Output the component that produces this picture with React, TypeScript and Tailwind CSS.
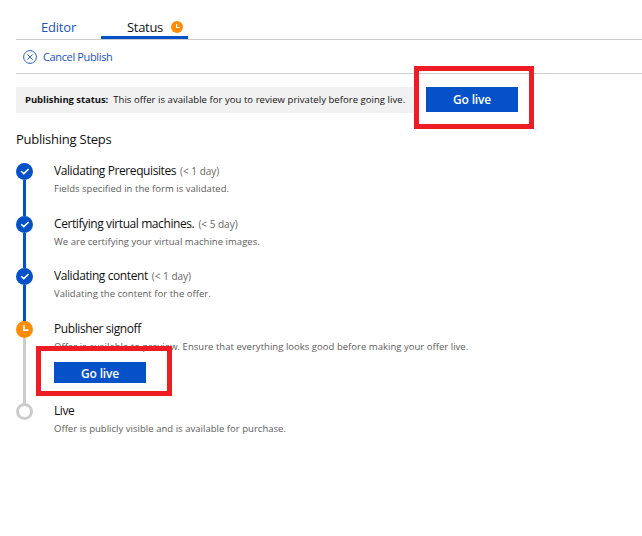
import type { ReactNode } from "react";

function ClockIcon({ className }: { className: string }) {
  return (
    <svg viewBox="0 0 17 17" className={className}>
      <circle cx="8.5" cy="8.5" r="8.5" fill="#ff8c00" />
      <path d="M8 4v5.2h4.4" fill="none" stroke="#fff" strokeWidth="1.7" />
    </svg>
  );
}

function CheckIcon() {
  return (
    <svg viewBox="0 0 17 17" className="block size-[17px]">
      <circle cx="8.5" cy="8.5" r="8.5" fill="#0551c8" />
      <path d="M5.2 8.2l2.6 2.4 4.8-4.6" fill="none" stroke="#fff" strokeWidth="1.5" />
    </svg>
  );
}

function CancelIcon() {
  return (
    <svg viewBox="0 0 14 14" className="mt-px block size-[14px]" fill="none" stroke="#2a63c4">
      <circle cx="7" cy="7" r="6.4" strokeWidth="1" />
      <path d="M4.3 4.3l5.4 5.4M9.7 4.3l-5.4 5.4" strokeWidth="1" />
    </svg>
  );
}

function GoLive({ className }: { className: string }) {
  return (
    <button
      className={`flex w-[92px] items-center justify-center bg-[#0551c8] text-[12px] font-semibold tracking-[-0.2px] text-white ${className}`}
    >
      Go live
    </button>
  );
}

type StepProps = {
  icon: ReactNode;
  title: string;
  duration?: string;
  text: string;
  height: string;
  line?: string;
  children?: ReactNode;
};

function Step({ icon, title, duration, text, height, line, children }: StepProps) {
  return (
    <li className={`flex ${height}`}>
      <div className="flex w-[17px] shrink-0 flex-col items-center">
        {icon}
        {line && <div className={`w-[3px] grow ${line}`} />}
      </div>
      <div className="ml-[21px] whitespace-nowrap">
        <div className="flex h-[17px] items-baseline text-[12px] leading-[16px] text-[#111]">
          <span className="tracking-[-0.41px]">{title}</span>
          {duration && <span className="ml-1 text-[10px] text-[#666]">{duration}</span>}
        </div>
        <p className="mt-[2px] h-[14px] text-[9.5px] leading-[14px] tracking-[0.03px] text-[#5c5c5c]">{text}</p>
        {children}
      </div>
    </li>
  );
}

export default function App() {
  return (
    <main className="relative h-[536px] w-[642px] overflow-hidden bg-white pl-4 font-['Open_Sans','Noto_Sans',sans-serif] text-[#111]">
      <nav className="flex h-10 border-b border-[#ccc] pt-[15px] text-[13px]">
        <div className="w-[85px] pl-[25px] leading-[24px] tracking-[-0.2px] text-[#1b54bd]">Editor</div>
        <div className="flex h-6 w-[87px] items-center border-b-[3px] border-[#0551c8] pl-[26px]">
          <span className="mt-[3px] leading-6 tracking-[-0.3px]">Status</span>
          <ClockIcon className="mt-[3px] ml-2 size-3" />
        </div>
      </nav>
      <div className="flex h-[34px] items-center border-b border-[#ccc] pl-[7px] text-[11px] text-[#1b54bd]">
        <CancelIcon />
        <span className="mt-[2px] ml-[6px] tracking-[-0.36px]">Cancel Publish</span>
      </div>
      <div className="mt-[13px] flex h-[26px]">
        <div className="flex w-[400px] items-center whitespace-nowrap bg-[#f1f1f1] pl-[9px] text-[9.5px]">
          <strong className="font-bold tracking-[-0.06px]">Publishing status:</strong>
          <span className="ml-[5px] tracking-[0.05px]">This offer is available for you to review privately before going live.</span>
        </div>
        <GoLive className="ml-[10px] h-[25px]" />
      </div>
      <h2 className="mt-4 h-[20px] text-[13px] leading-[20px] tracking-[-0.24px]">Publishing Steps</h2>
      <ol className="mt-[14px]">
        <Step icon={<CheckIcon />} title="Validating Prerequisites" duration="(< 1 day)" text="Fields specified in the form is validated." height="h-[53px]" line="bg-[#0551c8]" />
        <Step icon={<CheckIcon />} title="Certifying virtual machines." duration="(< 5 day)" text="We are certifying your virtual machine images." height="h-[52px]" line="bg-[#0551c8]" />
        <Step icon={<CheckIcon />} title="Validating content" duration="(< 1 day)" text="Validating the content for the offer." height="h-[53px]" line="bg-[#0551c8]" />
        <Step icon={<ClockIcon className="block size-[17px]" />} title="Publisher signoff" text="Offer is available to preview. Ensure that everything looks good before making your offer live." height="h-[82px]" line="bg-[#ccc]">
          <GoLive className="mt-[8px] h-[21px] pt-[2px]" />
        </Step>
        <Step icon={<div className="size-[17px] rounded-full border-[3px] border-[#ccc]" />} title="Live" text="Offer is publicly visible and is available for purchase." height="h-[34px]" />
      </ol>
      <div className="absolute top-[66px] left-[414px] h-[63px] w-[120px] border-[5px] border-[#ee1c25]" />
      <div className="absolute top-[346px] left-[36px] h-[50px] w-[136px] border-[5px] border-[#ee1c25]" />
    </main>
  );
}
